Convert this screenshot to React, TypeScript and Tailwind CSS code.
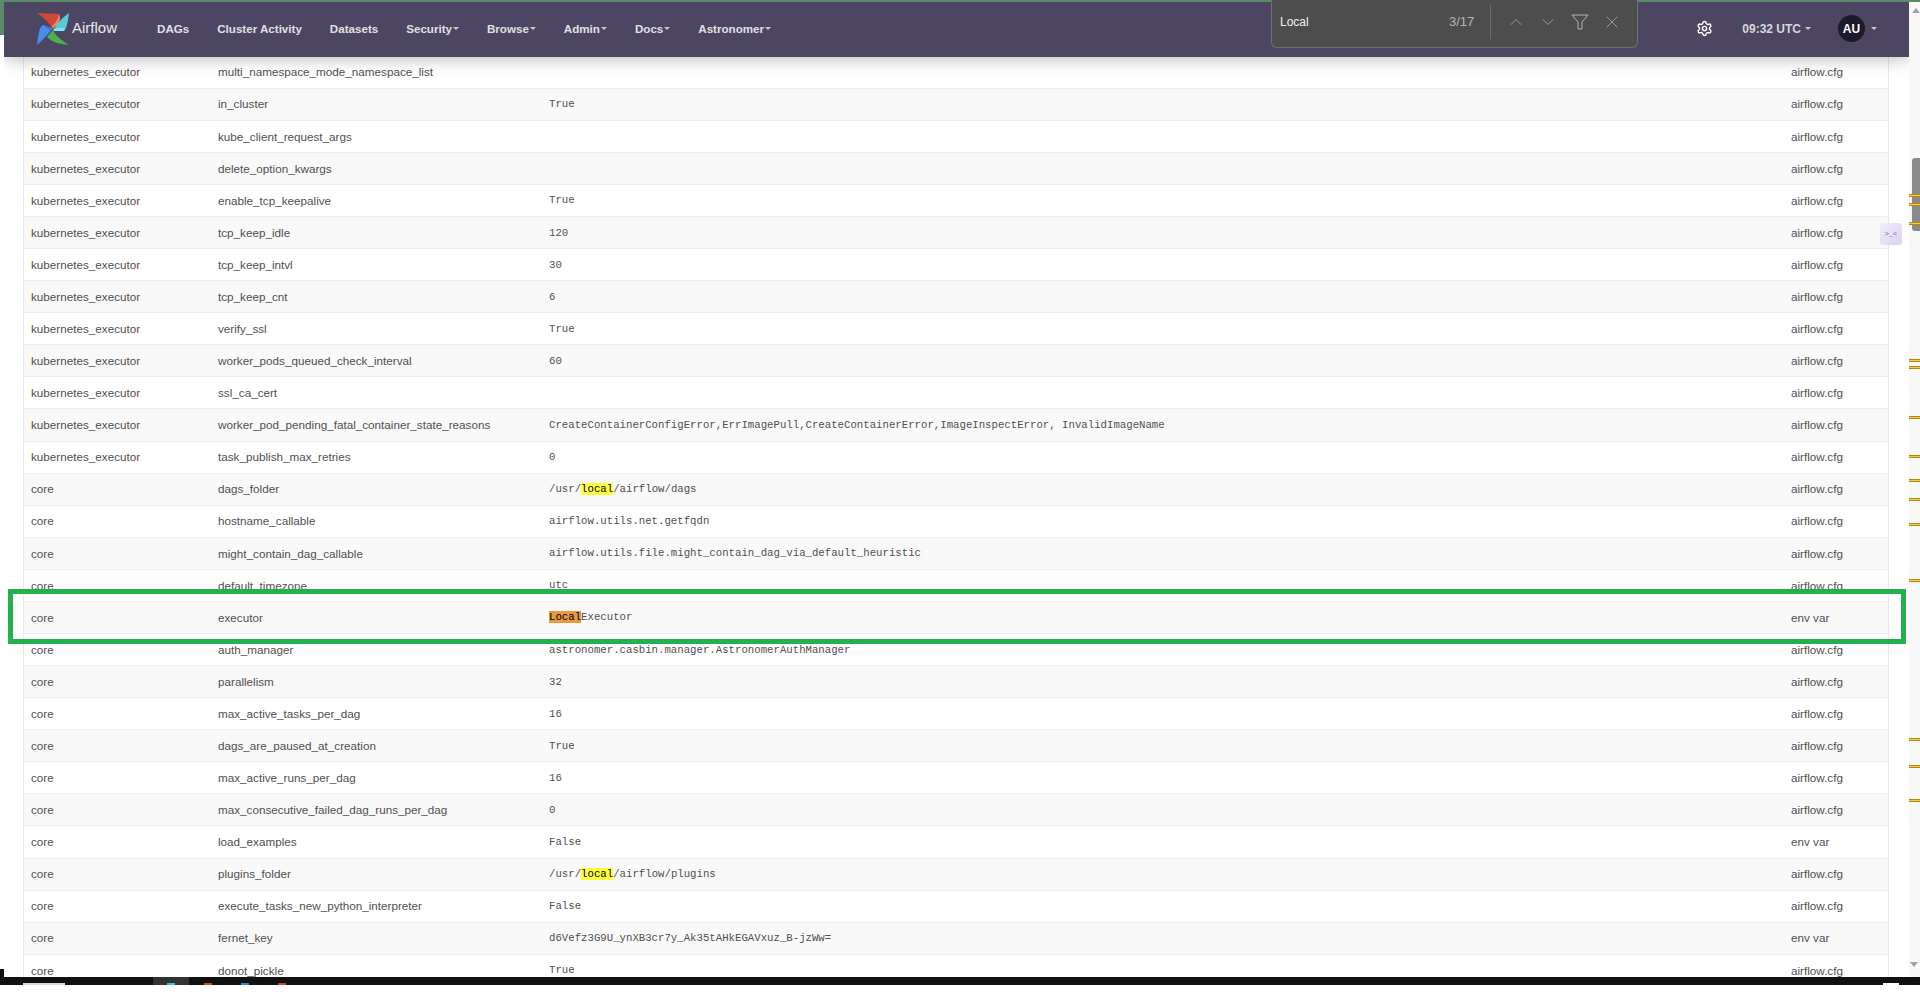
import React from 'react';
import { ChevronDown, ChevronUp, Settings, X } from 'lucide-react';

type Row = { section: string; name: string; value?: React.ReactNode; source?: string };

const K = 'kubernetes_executor';

const Hit: React.FC<{ text: string; current?: boolean }> = ({ text, current }) => (
  <span className={current ? 'bg-[#e8983f] text-black' : 'bg-[#ffff38] text-black'}>{text}</span>
);

const rows: Row[] = [
  { section: K, name: 'multi_namespace_mode_namespace_list' },
  { section: K, name: 'in_cluster', value: 'True' },
  { section: K, name: 'kube_client_request_args' },
  { section: K, name: 'delete_option_kwargs' },
  { section: K, name: 'enable_tcp_keepalive', value: 'True' },
  { section: K, name: 'tcp_keep_idle', value: '120' },
  { section: K, name: 'tcp_keep_intvl', value: '30' },
  { section: K, name: 'tcp_keep_cnt', value: '6' },
  { section: K, name: 'verify_ssl', value: 'True' },
  { section: K, name: 'worker_pods_queued_check_interval', value: '60' },
  { section: K, name: 'ssl_ca_cert' },
  {
    section: K,
    name: 'worker_pod_pending_fatal_container_state_reasons',
    value: 'CreateContainerConfigError,ErrImagePull,CreateContainerError,ImageInspectError, InvalidImageName',
  },
  { section: K, name: 'task_publish_max_retries', value: '0' },
  { section: 'core', name: 'dags_folder', value: <>/usr/<Hit text="local" />/airflow/dags</> },
  { section: 'core', name: 'hostname_callable', value: 'airflow.utils.net.getfqdn' },
  { section: 'core', name: 'might_contain_dag_callable', value: 'airflow.utils.file.might_contain_dag_via_default_heuristic' },
  { section: 'core', name: 'default_timezone', value: 'utc' },
  { section: 'core', name: 'executor', value: <><Hit text="Local" current />Executor</>, source: 'env var' },
  { section: 'core', name: 'auth_manager', value: 'astronomer.casbin.manager.AstronomerAuthManager' },
  { section: 'core', name: 'parallelism', value: '32' },
  { section: 'core', name: 'max_active_tasks_per_dag', value: '16' },
  { section: 'core', name: 'dags_are_paused_at_creation', value: 'True' },
  { section: 'core', name: 'max_active_runs_per_dag', value: '16' },
  { section: 'core', name: 'max_consecutive_failed_dag_runs_per_dag', value: '0' },
  { section: 'core', name: 'load_examples', value: 'False', source: 'env var' },
  { section: 'core', name: 'plugins_folder', value: <>/usr/<Hit text="local" />/airflow/plugins</> },
  { section: 'core', name: 'execute_tasks_new_python_interpreter', value: 'False' },
  { section: 'core', name: 'fernet_key', value: 'd6Vefz3G9U_ynXB3cr7y_Ak35tAHkEGAVxuz_B-jzWw=', source: 'env var' },
  { section: 'core', name: 'donot_pickle', value: 'True' },
];

const menu = [
  { label: 'DAGs' },
  { label: 'Cluster Activity' },
  { label: 'Datasets' },
  { label: 'Security', caret: true },
  { label: 'Browse', caret: true },
  { label: 'Admin', caret: true },
  { label: 'Docs', caret: true },
  { label: 'Astronomer', caret: true },
];

const scrollMarks = [195, 204, 223, 360, 367, 417, 456, 480, 499, 524, 580, 739, 766, 800];

const Caret = () => (
  <span className="ml-[1px] inline-block border-x-[3px] border-t-[3px] border-x-transparent border-t-[#c9c9c9]" />
);

const Logo = () => (
  <svg width="32" height="32" viewBox="0 0 32 32" className="shrink-0">
    <path d="M0 0 L22 1 C23 6 21 9 18 11 L15.5 16 C12 9 6 4 0 0 Z" fill="#cf4a32" />
    <path d="M22 1 C24 6 23 11 16 15.5 L15 13 C19 10 21 6 22 1 Z" fill="#e98a6c" />
    <path d="M32 0 C31 8 30 14 27 18 L17 18 C18 12 25 5 32 0 Z" fill="#58c9d8" />
    <path d="M27 18 L17 18 L16 16 C19 15 22 15 28 15 Z" fill="#7fe3ee" />
    <path d="M32 32 C24 31 16 30 10 24 L16 17 C19 24 26 28 32 32 Z" fill="#4caf50" />
    <path d="M0 32 C1 24 2 14 6 12 L15.5 15.5 C12 20 6 27 0 32 Z" fill="#4a8cf0" />
    <path d="M6 12 L15.5 15.5 L13 18 C10 15 8 14 6 12 Z" fill="#3a78d8" />
  </svg>
);

const FindBar = () => (
  <div className="absolute left-[1271px] top-0 z-30 flex h-[48px] w-[367px] items-center rounded-b-md border border-t-0 border-[#6f6f6f] bg-[#4d4d4d] pb-[3px] text-[12px] text-[#f2f2f2]">
    <span className="ml-[8px] w-[169px]">Local</span>
    <span className="text-[#b5b5b5] text-[13px]">3/17</span>
    <span className="ml-[16px] h-[34px] w-px bg-[#6b6b6b]" />
    <ChevronUp size={20} strokeWidth={1} className="ml-[15px] text-[#a8a8a8]" />
    <ChevronDown size={20} strokeWidth={1} className="ml-[12px] text-[#a8a8a8]" />
    <svg width="18" height="16" viewBox="0 0 18 16" fill="none" stroke="#b5b5b5" className="ml-[13px]">
      <path d="M1 1 H17 L11 8 V15 H7 V8 Z" />
    </svg>
    <X size={20} strokeWidth={1} className="ml-[13px] text-[#a8a8a8]" />
  </div>
);

const Navbar = () => (
  <nav className="relative z-20 flex h-[55px] shrink-0 items-center bg-[#4d4663] pb-[2px] pl-[33px] pr-[32px] shadow-[0_4px_14px_rgba(0,0,0,0.22)]">
    <Logo />
    <span className="ml-[3px] mr-[40px] text-[15px] text-[#e8e8e8]">Airflow</span>
    <div className="flex items-center gap-[28px] text-[11.6px] font-bold text-[#e0e0e0]">
      {menu.map((m) => (
        <span key={m.label} className="flex items-center whitespace-nowrap">
          {m.label}
          {m.caret && <Caret />}
        </span>
      ))}
    </div>
    <div className="ml-auto flex items-center text-[12px] font-bold text-[#d6d6d6]">
      <Settings size={17} strokeWidth={2} className="text-white" />
      <span className="ml-[29px] whitespace-nowrap">09:32 UTC</span>
      <span className="ml-[3px] flex"><Caret /></span>
      <span className="ml-[27px] flex h-[27px] w-[27px] items-center justify-center rounded-full bg-[#1d1a2a] text-white">AU</span>
      <span className="ml-[5px] flex"><Caret /></span>
    </div>
  </nav>
);

const ConfigTable = () => (
  <div className="-mt-[0.4px] ml-[19px] mr-[20px] border-x border-[#e8e8e8] text-[11.7px] text-[#51504f]">
    {rows.map((r, i) => (
      <div
        key={r.name}
        className={`grid h-[32.08px] grid-cols-[186px_331px_1fr_105px] items-center border-b border-[#eeeeee] ${
          i % 2 === 1 ? 'bg-[#f9f9f9]' : 'bg-white'
        }`}
      >
        <span className="pl-[7px]">{r.section}</span>
        <span className="pl-[8px]">{r.name}</span>
        <span className="pl-[8px] font-['Liberation_Mono',monospace] text-[10.7px]">{r.value}</span>
        <span className="pl-[8px]">{r.source ?? 'airflow.cfg'}</span>
      </div>
    ))}
  </div>
);

const Scrollbar = () => (
  <aside className="relative w-[11px] shrink-0 bg-[#f8f8f8]">
    <span className="absolute left-[3px] top-[6px] border-x-[4px] border-b-[5px] border-x-transparent border-b-[#a0a0a0]" />
    <span className="absolute right-0 top-[156px] h-[73px] w-[8px] rounded-l-[3px] bg-[#8a8a8a]" />
    {scrollMarks.map((y) => (
      <span
        key={y}
        className="absolute left-0 h-[3px] w-full border-y border-[#b8860b] bg-[#f2cf4a]"
        style={{ top: y - 3 }}
      />
    ))}
    <span className="absolute bottom-[10px] left-[1px] border-x-[4px] border-t-[5px] border-x-transparent border-t-[#a0a0a0]" />
  </aside>
);

const App: React.FC = () => (
  <div className="relative flex h-[992px] w-full flex-col overflow-hidden bg-white font-['Liberation_Sans',Arial,sans-serif]">
    <div className="h-[2px] shrink-0 bg-[#5b8a6a]" />
    <div className="flex min-h-0 flex-1">
      <div className="flex w-[4px] shrink-0 flex-col justify-between">
        <span className="h-[33px] bg-[#5b8a6a]" />
        <span className="h-[8px] bg-[#111111]" />
      </div>
      <main className="min-w-0 flex-1 overflow-hidden">
        <Navbar />
        <ConfigTable />
      </main>
      <Scrollbar />
    </div>
    <div className="relative h-[8px] shrink-0 bg-[#111111]">
      <span className="absolute left-[153px] top-0 h-full w-[36px] bg-[#333333]" />
      <span className="absolute left-[23px] top-[6px] h-[2px] w-[42px] bg-[#d8d8d8]" />
      <span className="absolute left-[167px] top-[6px] h-[2px] w-[8px] bg-[#2cc5d8]" />
      <span className="absolute left-[204px] top-[6px] h-[2px] w-[8px] bg-[#d8402f]" />
      <span className="absolute left-[241px] top-[6px] h-[2px] w-[8px] bg-[#1f88e5]" />
      <span className="absolute left-[278px] top-[6px] h-[2px] w-[8px] bg-[#d8402f]" />
      <span className="absolute left-[1883px] top-[6px] h-[2px] w-[16px] bg-white" />
    </div>
    <div className="h-[7px] shrink-0 bg-white" />

    <FindBar />

    {/* green marker around the executor row */}
    <div className="pointer-events-none absolute left-[8px] top-[589px] z-10 h-[55px] w-[1898px] border-[5px] border-[#22b14c]" />

    {/* extension tab floating over the table */}
    <div className="absolute left-[1880px] top-[223px] z-10 flex h-[22px] w-[22px] items-center justify-center rounded-[3px] bg-gradient-to-br from-[#f1eef8] to-[#dcd0f3] font-['Liberation_Mono',monospace] text-[7px] text-[#6b6b7b]">
      {'>_<'}
    </div>
  </div>
);

export default App;
